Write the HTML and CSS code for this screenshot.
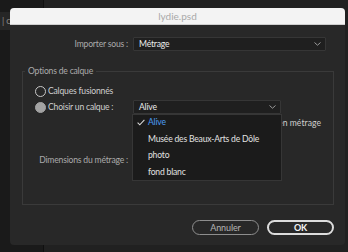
FILE: index.html
```html
<!DOCTYPE html>
<html lang="fr">
<head>
<meta charset="utf-8">
<link rel="stylesheet" href="styles.css">
</head>
<body>
<div class="desk">
  <div class="pane-left"><div class="tab">| c</div></div>
  <div class="pane-right"></div>
</div>
<div class="dialog">
  <div class="titlebar">lydie.psd</div>
  <div class="body">
    <div class="row import">
      <span class="label">Importer sous :</span>
      <div class="select wide"><span class="value">Métrage</span><svg class="chev" width="7" height="4" viewBox="0 0 7 4"><path d="M0.5 0.5 L3.5 3.2 L6.5 0.5" fill="none" stroke="#9a9a9a" stroke-width="1"/></svg></div>
    </div>
    <fieldset class="group">
      <legend>Options de calque</legend>
      <div class="opt"><span class="radio"></span><span class="optlabel">Calques fusionnés</span></div>
      <div class="opt">
        <span class="lead"><span class="radio on"></span><span class="optlabel">Choisir un calque :</span></span>
        <div class="select narrow"><span class="value">Alive</span><svg class="chev" width="7" height="4" viewBox="0 0 7 4"><path d="M0.5 0.5 L3.5 3.2 L6.5 0.5" fill="none" stroke="#9a9a9a" stroke-width="1"/></svg>
          <div class="menu">
            <div class="item sel"><svg class="check" width="8" height="7" viewBox="0 0 8 7"><path d="M0.6 3.6 L2.8 5.8 L7.4 0.8" fill="none" stroke="#d6d6d6" stroke-width="1.1"/></svg><span>Alive</span></div>
            <div class="item"><span>Musée des Beaux-Arts de Dôle</span></div>
            <div class="item"><span>photo</span></div>
            <div class="item"><span>fond blanc</span></div>
          </div>
        </div>
      </div>
      <div class="opt sub"><span class="optlabel wideText">Fusionner les styles de calque en métrage</span></div>
      <div class="opt sub"></div>
      <div class="row dims">
        <span class="label dimlabel">Dimensions du métrage :</span>
        <div class="select narrow"></div>
      </div>
    </fieldset>
    <div class="buttons">
      <button class="btn cancel">Annuler</button>
      <button class="btn ok">OK</button>
    </div>
  </div>
</div>
</body>
</html>
```
FILE: styles.css
```css
html, body {
  margin: 0;
  padding: 0;
  width: 348px;
  height: 252px;
  overflow: hidden;
  background: #1d1d1d;
  font-family: "Lato", "Liberation Sans", sans-serif;
  font-size: 8.6px;
  letter-spacing: -0.2px;
}
.desk {
  position: absolute;
  inset: 0;
  display: flex;
}
.pane-left {
  width: 43px;
  background: #1a1a1a;
  border-right: 1px solid #101010;
}
.tab {
  margin-top: 12px;
  height: 18px;
  background: #262626;
  color: #8a8a8a;
  line-height: 18px;
  padding-left: 2px;
  font-size: 9px;
}
.pane-right {
  flex: 1;
  background: #212121;
}
.dialog {
  position: absolute;
  left: 10px;
  top: 8px;
  width: 335px;
  height: 237px;
  background: #282828;
  border-radius: 4px;
  overflow: hidden;
  display: flex;
  flex-direction: column;
}
.titlebar {
  height: 17px;
  background: #f3f3f3;
  color: #a9a9a9;
  text-align: center;
  line-height: 17px;
  font-size: 10px;
  letter-spacing: 0;
  border-bottom: 1px solid #cfcfcf;
  box-sizing: border-box;
}
.body {
  flex: 1;
  display: flex;
  flex-direction: column;
}
.row {
  display: flex;
  align-items: center;
}
.import {
  margin-top: 12px;
  height: 14px;
}
.label {
  width: 118px;
  text-align: right;
  color: #ababab;
  padding-right: 5px;
  box-sizing: border-box;
  flex: none;
}
.import .label { width: 123px; }
.select {
  position: relative;
  height: 14px;
  box-sizing: border-box;
  background: #1f1f1f;
  border: 1px solid #363636;
  border-radius: 1px;
  display: flex;
  align-items: center;
  padding-left: 5px;
  color: #ececec;
}
.value {
  flex: 1;
}
.chev {
  margin-right: 4px;
}
.wide { width: 193px; }
.narrow { width: 148px; }
.group {
  margin: 15px 11px 0 12px;
  padding: 6px 0 36px 0;
  border: 1px solid #3a3a3a;
  min-width: 0;
}
.group legend {
  margin-left: 2px;
  padding: 0 3px;
  color: #ababab;
  line-height: 11px;
}
.opt {
  display: flex;
  align-items: center;
  height: 16px;
  padding-left: 12px;
}
.lead {
  width: 98px;
  display: flex;
  align-items: center;
  flex: none;
}
.radio {
  width: 9px;
  height: 9px;
  border: 1px solid #c8c8c8;
  border-radius: 50%;
  margin-right: 2px;
  flex: none;
}
.radio.on {
  background: #a3a3a3;
  border-color: #a3a3a3;
}
.optlabel {
  color: #cfcfcf;
}
.sub {
  justify-content: flex-end;
  padding-right: 12px;
}
.wideText {
  letter-spacing: 0.05px;
}
.dims {
  margin-top: 5px;
  height: 16px;
}
.dimlabel {
  width: 110px;
}
.menu {
  position: absolute;
  top: 13px;
  left: -2px;
  width: 150px;
  height: 67px;
  box-sizing: border-box;
  background: #1b1b1b;
  border: 1px solid #363636;
  padding-top: 0;
  z-index: 5;
}
.item {
  height: 16.5px;
  display: flex;
  align-items: center;
  padding-left: 15px;
  padding-bottom: 2px;
  box-sizing: border-box;
  color: #e2e2e2;
  position: relative;
}
.item.sel { color: #4b9bf4; }
.check {
  position: absolute;
  left: 4px;
  top: 4px;
}
.buttons {
  display: flex;
  justify-content: flex-end;
  gap: 8px;
  margin-top: 15px;
  padding-right: 11px;
}
.btn {
  width: 67px;
  height: 15px;
  border-radius: 8px;
  background: transparent;
  font-family: inherit;
  font-size: 9px;
  letter-spacing: -0.1px;
  padding: 0;
  box-sizing: border-box;
  line-height: 1;
}
.cancel {
  border: 1px solid #8e8e8e;
  color: #b4b4b4;
}
.ok {
  border: 2px solid #dcdcdc;
  color: #f2f2f2;
  font-weight: bold;
}
```
